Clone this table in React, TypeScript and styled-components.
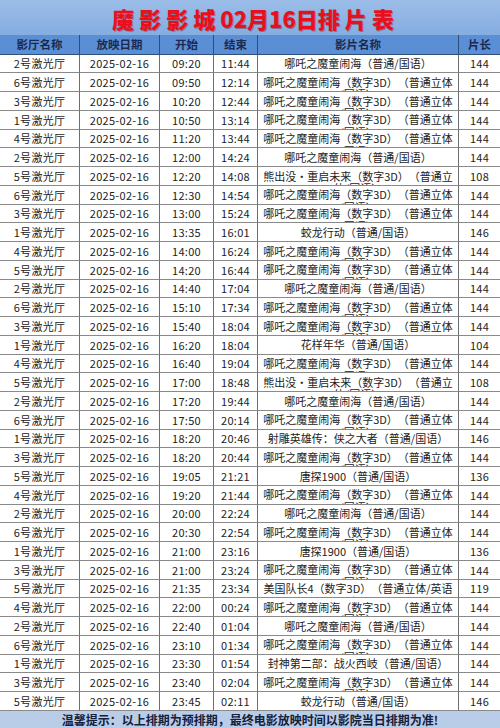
import React from 'react'
import styled, { createGlobalStyle } from 'styled-components'

type Show = [hall: string, start: string, end: string, film: string, length: string]

const NEZHA = '哪吒之魔童闹海（普通/国语）'
const NEZHA_3D = '哪吒之魔童闹海（数字3D）（普通立体/国语）'
const BEAR = '熊出没·重启未来（数字3D）（普通立体/国语）'
const JIAOLONG = '蛟龙行动（普通/国语）'
const TANGTAN = '唐探1900（普通/国语）'

const shows: Show[] = [
  ['2', '09:20', '11:44', NEZHA, '144'],
  ['6', '09:50', '12:14', NEZHA_3D, '144'],
  ['3', '10:20', '12:44', NEZHA_3D, '144'],
  ['1', '10:50', '13:14', NEZHA_3D, '144'],
  ['4', '11:20', '13:44', NEZHA_3D, '144'],
  ['2', '12:00', '14:24', NEZHA, '144'],
  ['5', '12:20', '14:08', BEAR, '108'],
  ['6', '12:30', '14:54', NEZHA_3D, '144'],
  ['3', '13:00', '15:24', NEZHA_3D, '144'],
  ['1', '13:35', '16:01', JIAOLONG, '146'],
  ['4', '14:00', '16:24', NEZHA_3D, '144'],
  ['5', '14:20', '16:44', NEZHA_3D, '144'],
  ['2', '14:40', '17:04', NEZHA, '144'],
  ['6', '15:10', '17:34', NEZHA_3D, '144'],
  ['3', '15:40', '18:04', NEZHA_3D, '144'],
  ['1', '16:20', '18:04', '花样年华（普通/国语）', '104'],
  ['4', '16:40', '19:04', NEZHA_3D, '144'],
  ['5', '17:00', '18:48', BEAR, '108'],
  ['2', '17:20', '19:44', NEZHA, '144'],
  ['6', '17:50', '20:14', NEZHA_3D, '144'],
  ['1', '18:20', '20:46', '射雕英雄传：侠之大者（普通/国语）', '146'],
  ['3', '18:20', '20:44', NEZHA_3D, '144'],
  ['5', '19:05', '21:21', TANGTAN, '136'],
  ['4', '19:20', '21:44', NEZHA_3D, '144'],
  ['2', '20:00', '22:24', NEZHA, '144'],
  ['6', '20:30', '22:54', NEZHA_3D, '144'],
  ['1', '21:00', '23:16', TANGTAN, '136'],
  ['3', '21:00', '23:24', NEZHA_3D, '144'],
  ['5', '21:35', '23:34', '美国队长4（数字3D）（普通立体/英语）', '119'],
  ['4', '22:00', '00:24', NEZHA_3D, '144'],
  ['2', '22:40', '01:04', NEZHA, '144'],
  ['6', '23:10', '01:34', NEZHA_3D, '144'],
  ['1', '23:30', '01:54', '封神第二部：战火西岐（普通/国语）', '144'],
  ['3', '23:40', '02:04', NEZHA_3D, '144'],
  ['5', '23:45', '02:11', JIAOLONG, '146'],
]

const headers = ['影厅名称', '放映日期', '开始', '结束', '影片名称', '片长']

const App = () => {
  return (
    <>
      <GlobalStyle />
      <Sheet>
        <Title>魔 影 影 城 02月16日排 片 表</Title>
        <Grid>
          {headers.map((h) => (
            <HeadCell key={h}>{h}</HeadCell>
          ))}
          {shows.map(([hall, start, end, film, length], i) => (
            <React.Fragment key={i}>
              <Cell>{hall}号激光厅</Cell>
              <Cell>2025-02-16</Cell>
              <Cell>{start}</Cell>
              <Cell>{end}</Cell>
              <FilmCell>{film}</FilmCell>
              <Cell $last>{length}</Cell>
            </React.Fragment>
          ))}
        </Grid>
        <Footer>温馨提示：以上排期为预排期，最终电影放映时间以影院当日排期为准!</Footer>
      </Sheet>
    </>
  )
}

export default App

const GlobalStyle = createGlobalStyle`
  html, body {
    margin: 0;
    padding: 0;
    background: #ffffff;
  }
  body {
    font-family: "Noto Sans CJK SC", "Noto Sans", sans-serif;
    text-spacing-trim: space-all;
  }
`

const Sheet = styled.div`
  width: 500px;
  height: 728px;
  display: flex;
  flex-direction: column;
  overflow: hidden;
`

const Title = styled.div`
  height: 35px;
  display: flex;
  align-items: center;
  justify-content: center;
  padding-left: 6px;
  box-sizing: border-box;
  background: linear-gradient(#9bbde8, #86ade0);
  color: #e8101c;
  font-size: 22px;
  font-weight: 900;
  white-space: pre;
  text-shadow: 1px 1px 0 rgba(120, 0, 0, 0.35);
`

const Grid = styled.div`
  display: grid;
  grid-template-columns: 80px 80px 54px 44px 201px 41px;
  grid-template-rows: 19.5px repeat(35, 18.75px);
`

const HeadCell = styled.div`
  display: flex;
  align-items: center;
  justify-content: center;
  background: #5b8fd5;
  color: #1b2a4e;
  font-size: 11.5px;
  font-weight: 700;
  border-right: 1px solid #2f4f7a;
  border-bottom: 1px solid #2f4f7a;
  box-sizing: border-box;

  &:nth-child(6) {
    border-right: none;
  }
`

const Cell = styled.div<{ $last?: boolean }>`
  display: flex;
  align-items: center;
  justify-content: center;
  font-size: 11px;
  color: #222222;
  background: #ffffff;
  border-right: ${(p) => (p.$last ? 'none' : '1px solid #6e6e6e')};
  border-bottom: 1px solid #8a8a8a;
  box-sizing: border-box;
  white-space: nowrap;
  letter-spacing: 0.3px;
`

const FilmCell = styled.div`
  font-size: 11px;
  color: #222222;
  background: #ffffff;
  text-align: center;
  line-height: 12.5px;
  padding: 2.5px 3.8px 0;
  border-right: 1px solid #6e6e6e;
  border-bottom: 1px solid #8a8a8a;
  box-sizing: border-box;
  overflow: hidden;
  line-break: anywhere;
`

const Footer = styled.div`
  flex: 1;
  display: flex;
  align-items: center;
  justify-content: center;
  background: #b9cde8;
  color: #14213d;
  font-size: 12px;
  font-weight: 700;
`
